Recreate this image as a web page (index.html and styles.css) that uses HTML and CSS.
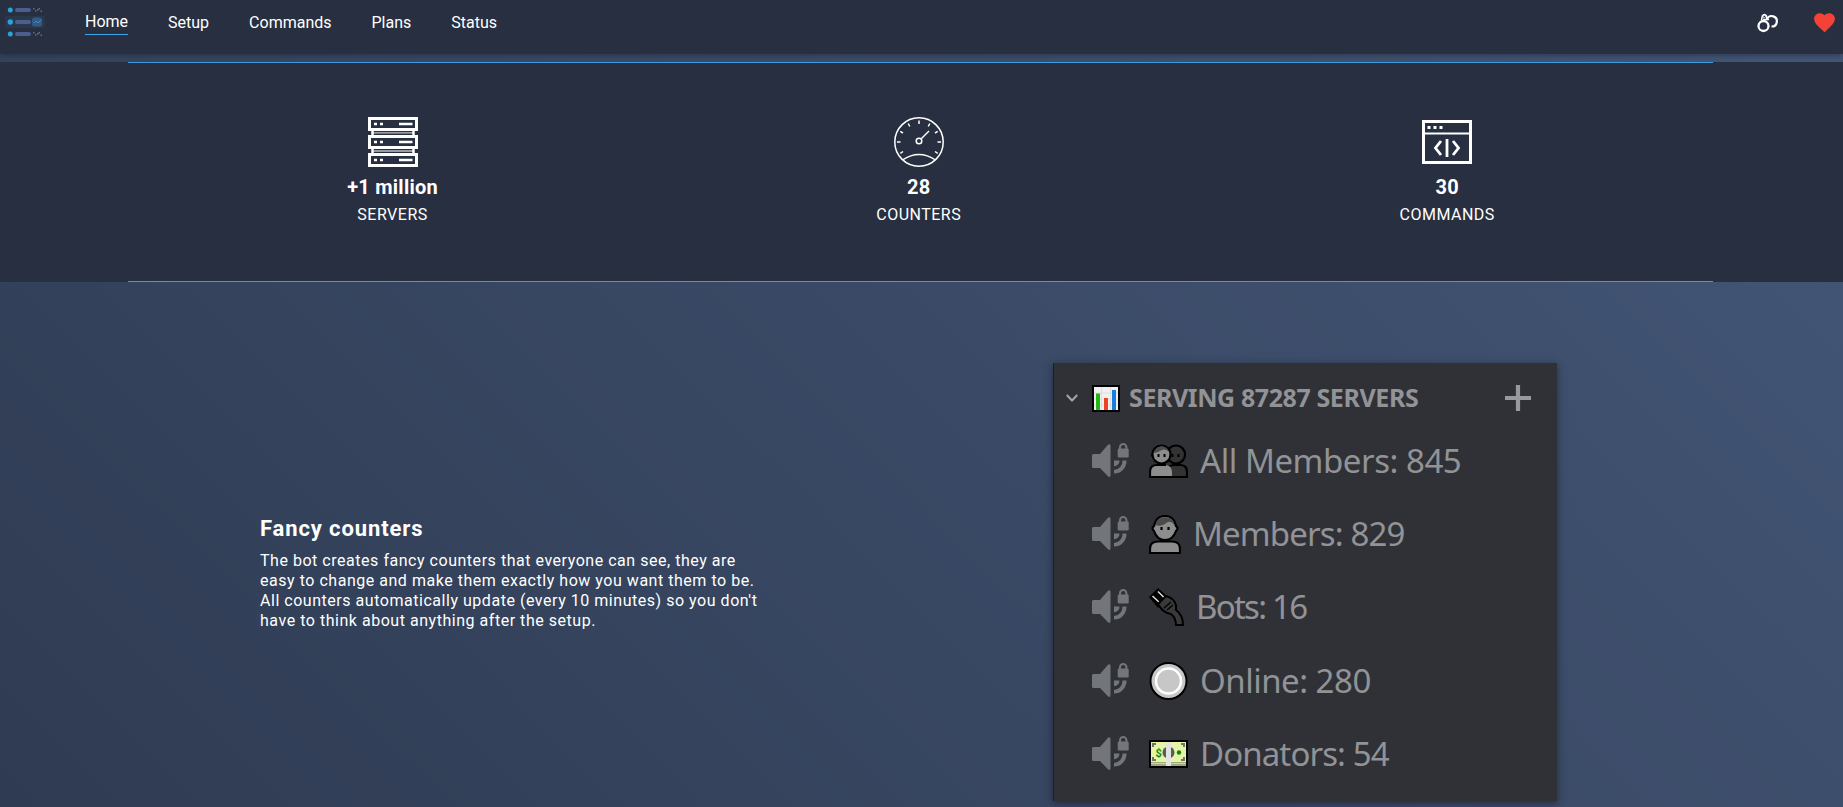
FILE: index.html
```html
<!DOCTYPE html>
<html lang="en">
<head>
<meta charset="utf-8">
<title>Home</title>
<link rel="stylesheet" href="styles.css">
</head>
<body>
<svg class="defs" width="0" height="0">
  <symbol id="voice" viewBox="0 0 38 36">
    <path d="M1.500 11H8L16 1.800Q18.500 0 18.500 3V32Q18.500 35 16 33.200L8 25H1.500Q0 25 0 23.500V12.500Q0 11 1.500 11Z"/>
    <path d="M22 17.500H27.500A5.500 5.500 0 0 1 22 23.200ZM30.500 17.500H34.500A12.500 12.500 0 0 1 22 30.500V27A9 9 0 0 0 30.500 17.500Z"/>
    <rect x="25.700" y="5.500" width="11" height="9" rx="1.300"/>
    <path d="M28 6V4.300A3.200 3.200 0 0 1 34.400 4.300V6" fill="none" stroke="#72767b" stroke-width="2"/>
  </symbol>
</svg>
<header class="navbar">
  <svg class="logo" width="40" height="32" viewBox="0 0 40 32">
    <rect x="0" y="10" width="40" height="12" rx="2" fill="#29394b"/>
    <rect x="27" y="11.500" width="10" height="9" rx="2.500" fill="#315b87"/>
    <g fill="#2ba1dc"><circle cx="5.300" cy="4" r="2.500"/><circle cx="5.300" cy="16" r="2.700"/><circle cx="5.300" cy="28" r="2.500"/></g>
    <g fill="#4b5f8e"><rect x="10" y="2" width="16" height="4" rx="2"/><rect x="10" y="14" width="16" height="4" rx="2"/><rect x="10" y="26" width="16" height="4" rx="2"/></g>
    <g fill="#58708c"><path id="dots" d="M28 2h1.500v1.500H28zM30 4h1.500v1.500H30zM32 3h1.500v1.500H32zM33.500 2H35v1.500h-1.500zM35.500 4.500H37V6h-1.500z"/><use href="#dots" y="24"/></g>
    <path d="M29 17l2-2 2 2 3-3" fill="none" stroke="#4b84b6"/>
  </svg>
  <nav class="links">
    <a class="link active">Home</a><a class="link">Setup</a><a class="link">Commands</a><a class="link">Plans</a><a class="link">Status</a>
  </nav>
  <div class="actions">
    <svg width="22" height="20" viewBox="0 0 22 20" fill="none" stroke="#fff">
      <circle cx="6.500" cy="13" r="5" stroke-width="2.300"/>
      <path d="M10 6A5.200 5.200 0 1 1 14.500 13.500" stroke-width="2.200"/>
      <path d="M4.500 7.500L5.300 3Q7.500 -.2 9.500 3L10 6.500" stroke-width="1.500"/>
      <circle cx="7.400" cy="3.500" r="1.200" stroke-width=".8"/>
      <path d="M6 6.500H12" stroke-width="1.500"/>
    </svg>
    <svg width="25" height="25" viewBox="0 0 24 24" fill="#f44336"><path d="M12 21.350l-1.450-1.320C5.400 15.360 2 12.280 2 8.500 2 5.420 4.420 3 7.500 3c1.740 0 3.410.81 4.500 2.090C13.090 3.810 14.760 3 16.500 3 19.580 3 22 5.420 22 8.500c0 3.780-3.400 6.860-8.550 11.540L12 21.350z"/></svg>
  </div>
</header>
<section class="stats">
  <div class="stats-inner">
    <div class="stat">
      <svg width="50" height="50" viewBox="0 0 50 50" fill="none" stroke="#fff" stroke-width="3">
        <path d="M1.500 1.500H48.500V12.500H1.500ZM1.500 19.500H48.500V30.500H1.500ZM1.500 37.500H48.500V48.500H1.500Z"/>
        <path d="M4.500 12V20M45.500 12V20M4.500 30V38M45.500 30V38" stroke-width="2.500"/>
        <path d="M5 15.800H45M5 34H45" stroke-width="1.300" opacity=".7"/>
        <path d="M6 7H9M12 7H15M31 7H44.500M6 25H9M12 25H15M31 25H44.500M6 43H9M12 43H15M31 43H44.500" stroke-width="2.500"/>
      </svg>
      <strong>+1 million</strong><span>SERVERS</span>
    </div>
    <div class="stat">
      <svg width="50" height="50" viewBox="0 0 50 50" fill="none" stroke="#fff" stroke-width="1.500">
        <circle cx="25" cy="25" r="24.200"/><circle cx="25" cy="24" r="2.800"/>
        <path d="M27 22L35 14"/><path d="M8.500 43Q25 32 41.500 43"/>
        <path d="M25 3.500V7M14.200 6.500L15.800 9.500M35.800 6.500L34.200 9.500M6.300 14.300L9 16M43.700 14.300L41 16M3 25H6.500M47 25H43.500M6.300 36.300L9 34.500M43.700 36.300L41 34.500"/>
      </svg>
      <strong>28</strong><span>COUNTERS</span>
    </div>
    <div class="stat">
      <svg width="50" height="50" viewBox="0 0 50 50" fill="none" stroke="#fff" stroke-width="3">
        <path d="M1.500 4.500H48.500V45.500H1.500Z"/><path d="M2 16.500H48" stroke-width="2.200"/>
        <path d="M5.500 10.500H8.500M11.500 10.500H14.500M17.500 10.500H20.500"/>
        <path d="M19 24L13.500 31L19 38M31 24L36.500 31L31 38M25 22V40" stroke-width="2.800"/>
      </svg>
      <strong>30</strong><span>COMMANDS</span>
    </div>
  </div>
</section>
<main class="feature">
  <article class="copy">
    <h2>Fancy counters</h2>
    <p>The bot creates fancy counters that everyone can see, they are<br>easy to change and make them exactly how you want them to be.<br>All counters automatically update (every 10 minutes) so you don't<br>have to think about anything after the setup.</p>
  </article>
  <div class="card">
    <div class="card-head">
      <svg class="chevron" width="12" height="8" viewBox="0 0 12 8"><path d="M.8 1L6 6.500L11.200 1" fill="none" stroke="#a4a7ab" stroke-width="1.900"/></svg>
      <svg class="chart" width="28" height="27" viewBox="0 0 28 27"><path d="M0 0H28V27H0Z" fill="#000"/><path d="M2 2H26V25H2Z" fill="#f1f1f1"/><path d="M9.500 2V25M18.500 2V25M2 8H26M2 14H26M2 20H26" stroke="#dedede"/><path d="M4 8.500H8V25H4Z" fill="#1fb814"/><path d="M12 13H16V25H12Z" fill="#ed4325"/><path d="M20 5H24V25H20Z" fill="#1680dc"/></svg>
      <span class="title">SERVING 87287 SERVERS</span>
      <svg class="plus" width="26" height="26" viewBox="0 0 26 26"><path d="M13 0V26M0 13H26" stroke="#97999d" stroke-width="4.200"/></svg>
    </div>
    <div class="row all">
      <svg class="voice"><use href="#voice"/></svg>
      <svg class="emoji" width="39" height="34" viewBox="0 0 39 34" stroke="#000" stroke-width="2.200">
        <path d="M17 33V27Q19 21 25 21H31Q38 21 38 28V33Z" fill="#333"/><circle cx="27" cy="10.500" r="9" fill="#333"/>
        <path d="M1 33V28Q1 21 8 21H17Q23 22 23 28V33Z" fill="#8d8d8d" stroke="none"/><path d="M23 33H1V28Q1 21 8 21H17" fill="none"/>
        <circle cx="12.500" cy="10.500" r="9" fill="#8d8d8d"/><path d="M4.500 9Q7 2.500 12 2.500Q18 2.500 19.500 7Q14 4 11 7Q8 9 4.500 9Z" fill="#4b4b4b" stroke="none"/>
        <path d="M3 11.500H1.800M9.500 10V13M15.500 10V13M23.500 10V13M29.500 10V13M36 11.500H37" stroke-width="2"/>
      </svg>
      <span>All Members: 845</span>
    </div>
    <div class="row members">
      <svg class="voice"><use href="#voice"/></svg>
      <svg class="emoji" width="32" height="39" viewBox="0 0 32 39" stroke="#000" stroke-width="2.200">
        <path d="M1 38V34Q1 26.500 9 26.500H23Q31 26.500 31 34V38Z" fill="#8d8d8d"/>
        <path d="M16 1Q25 1 27 11Q30 13 27 16Q24 25 16 25Q8 25 5 16Q2 13 5 11Q7 1 16 1Z" fill="#8d8d8d"/>
        <path d="M6.500 10Q8 2.200 16 2.200Q24 2.200 25.500 10Q21 4 16 9Q11 12 6.500 10Z" fill="#4b4b4b" stroke="none"/><path d="M12.500 12V15M19.500 12V15"/>
      </svg>
      <span>Members: 829</span>
    </div>
    <div class="row bots">
      <svg class="voice"><use href="#voice"/></svg>
      <svg class="emoji" width="35" height="38" viewBox="0 0 35 38" stroke="#000" stroke-width="2">
        <path d="M0 9L9 0L19 9L9 20Z" fill="#000" stroke="none"/><path d="M3.500 8L11 15M9 3.500L16 10.500" stroke="#ddd" stroke-width="1.500"/>
        <path d="M9 16L17 8Q25 10 27 17V22Q34 27 34 37H27Q27 30 22 26Q14 25 9 16Z" fill="#393939"/>
        <path d="M15 20L22 14M18 22L24 17" stroke-width="1.400"/>
      </svg>
      <span>Bots: 16</span>
    </div>
    <div class="row online">
      <svg class="voice"><use href="#voice"/></svg>
      <svg class="emoji" width="39" height="38" viewBox="0 0 39 38"><circle cx="19.500" cy="19" r="18" fill="#c7c7c7" stroke="#000" stroke-width="2"/><circle cx="19.500" cy="19" r="12.500" fill="#c7c7c7" stroke="#fff" stroke-width="2.500"/></svg>
      <span>Online: 280</span>
    </div>
    <div class="row donators">
      <svg class="voice"><use href="#voice"/></svg>
      <svg class="emoji" width="39" height="28" viewBox="0 0 39 28"><path d="M0 0H39V28H0Z" fill="#000"/><path d="M2 2H37V26H2Z" fill="#e5f5a8"/><path d="M2 22H37V26H2Z" fill="#9fa878"/><path d="M2 23.500H37" stroke="#cbd69a"/><path d="M4 7V4H7M32 4H35V7M35 17V20H32M7 20H4V17" fill="none" stroke="#6f7561" stroke-width="2"/><circle cx="19.500" cy="12.500" r="6" fill="#57604d"/><path d="M17 2.500H22V26H17Z" fill="#e2e2e2"/><text x="6.500" y="16.500" font-family="Roboto" font-weight="700" font-size="11" fill="#188b16">$</text><circle cx="30" cy="12.500" r="2.200" fill="#128412"/></svg>
      <span>Donators: 54</span>
    </div>
  </div>
</main>
</body>
</html>
```
FILE: styles.css
```css
* { box-sizing: border-box; }
html { height: 100%; overflow: hidden; }
body { margin: 0; height: 807px; overflow: hidden; color: #fff; font: 16px Roboto, sans-serif; background: linear-gradient(45deg, #2f3b52, #445778); }
svg { display: block; flex: none; }
.defs { position: absolute; }
.navbar { height: 54px; padding: 6px 8px 0 5px; display: flex; align-items: flex-start; background: #272f41; box-shadow: 0 2px 5px rgba(30, 38, 54, .5); }
.links { display: flex; gap: 40px; margin-left: 40px; padding-top: 5px; }
.link { height: 24px; line-height: 24px; }
.active { line-height: 22px; border-bottom: 1px solid #40a4e8; }
.actions { display: flex; align-items: center; gap: 33px; margin: 4px -2px 0 auto; }
.stats { height: 220px; margin-top: 8px; padding: 0 130px 0 128px; background: #272f41; }
.stats-inner { height: 220px; display: flex; justify-content: space-around; padding-top: 54px; border: solid #3c9cdf; border-width: 1px 0; }
.stat { display: flex; flex-direction: column; align-items: center; }
.stat:last-child { margin-right: -1px; }
.stat strong { font-size: 20px; line-height: 24px; margin-top: 8px; letter-spacing: .25px; }
.stat span { line-height: 20px; margin-top: 6px; letter-spacing: .5px; }
.feature { display: flex; padding: 81px 286px 0 260px; justify-content: space-between; }
.copy { padding-top: 154px; }
.copy h2 { font-size: 22px; line-height: 24px; margin: 0 0 10px; letter-spacing: .88px; }
.copy p { margin: 0; line-height: 20px; letter-spacing: .53px; white-space: nowrap; }
.card { width: 504px; height: 438px; padding-top: 12px; border-left: 1px solid #1d1e22; background: #303136; color: #919397; box-shadow: 0 2px 8px rgba(20, 25, 40, .65); font-family: "Noto Sans", sans-serif; }
.card-head { height: 46px; margin-bottom: 3px; display: flex; align-items: center; padding: 0 26px 0 12px; }
.chart { margin: 0 9px 0 14px; }
.title { font-size: 25px; font-weight: 700; white-space: nowrap; letter-spacing: -.4px; padding-bottom: 2px; }
.plus { margin-left: auto; }
.row { height: 73.400px; display: flex; align-items: center; padding-left: 38px; font-size: 33px; white-space: nowrap; }
.row span { padding-bottom: 1px; }
.voice { width: 38px; height: 36px; fill: #72767b; }
.emoji { margin: 0 12px 0 19px; }
.all { letter-spacing: -.45px; }
.members { letter-spacing: -.85px; }
.bots { letter-spacing: -1.750px; }
.online { letter-spacing: -.5px; }
.donators { letter-spacing: -.9px; }
```
